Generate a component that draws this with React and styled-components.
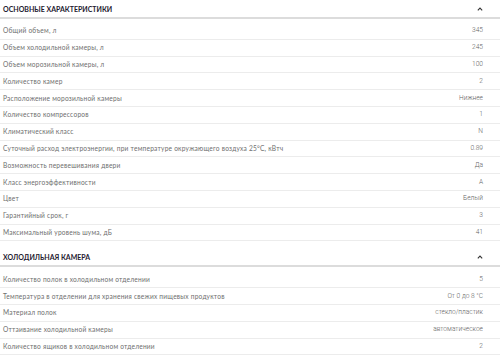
import React from "react";
import styled, { createGlobalStyle } from "styled-components";

const Global = createGlobalStyle`
  html, body { margin: 0; padding: 0; background: #fff; }
  body { font-family: "Lato", "Noto Sans", sans-serif; }
`;

const Page = styled.div`
  width: 500px;
  background: #fff;
`;

const Section = styled.section`
  margin-top: ${(p) => (p.$first ? "0" : "7px")};
`;

const Header = styled.div`
  display: flex;
  align-items: center;
  justify-content: space-between;
  height: 17px;
  padding: 0 17px 0 3px;
  border-bottom: 2px solid #dcdcdc;
`;

const Title = styled.h2`
  margin: 0;
  font-family: "Lato", sans-serif;
  font-weight: 700;
  font-size: 7px;
  letter-spacing: 0;
  color: #1e2030;
  text-transform: uppercase;
`;

const Chevron = styled.svg`
  width: 6px;
  height: 4px;
  display: block;
`;

const List = styled.div`
  padding-top: 4px;
`;

const Row = styled.div`
  display: flex;
  align-items: center;
  justify-content: space-between;
  box-sizing: border-box;
  height: 16.8px;
  padding: 0 17px 1px 3px;
  border-bottom: 1px solid #ececec;
  font-size: 6.6px;
  color: #6e6e6e;
`;

const Label = styled.span`
  font-family: "Lato", sans-serif;
  font-weight: 400;
  letter-spacing: 0.22px;
`;

const Value = styled.span`
  font-family: "Roboto", sans-serif;
  font-weight: 300;
  color: #5f5f5f;
`;

const sections = [
  {
    title: "Основные характеристики",
    rows: [
      ["Общий объем, л", "345"],
      ["Объем холодильной камеры, л", "245"],
      ["Объем морозильной камеры, л", "100"],
      ["Количество камер", "2"],
      ["Расположение морозильной камеры", "Нижнее"],
      ["Количество компрессоров", "1"],
      ["Климатический класс", "N"],
      ["Суточный расход электроэнергии, при температуре окружающего воздуха 25°С, кВтч", "0.89"],
      ["Возможность перевешивания двери", "Да"],
      ["Класс энергоэффективности", "А"],
      ["Цвет", "Белый"],
      ["Гарантийный срок, г", "3"],
      ["Максимальный уровень шума, дБ", "41"],
    ],
  },
  {
    title: "Холодильная камера",
    rows: [
      ["Количество полок в холодильном отделении", "5"],
      ["Температура в отделении для хранения свежих пищевых продуктов", "От 0 до 8 °С"],
      ["Материал полок", "стекло/пластик"],
      ["Оттаивание холодильной камеры", "автоматическое"],
      ["Количество ящиков в холодильном отделении", "2"],
    ],
  },
];

export default function App() {
  return (
    <Page>
      <Global />
      {sections.map((s, i) => (
        <Section key={s.title} $first={i === 0}>
          <Header>
            <Title>{s.title}</Title>
            <Chevron viewBox="0 0 6 4">
              <polyline points="0.8,3.3 3,1 5.2,3.3" fill="none" stroke="#333" strokeWidth="1.1" />
            </Chevron>
          </Header>
          <List>
            {s.rows.map(([l, v]) => (
              <Row key={l}>
                <Label>{l}</Label>
                <Value>{v}</Value>
              </Row>
            ))}
          </List>
        </Section>
      ))}
    </Page>
  );
}
